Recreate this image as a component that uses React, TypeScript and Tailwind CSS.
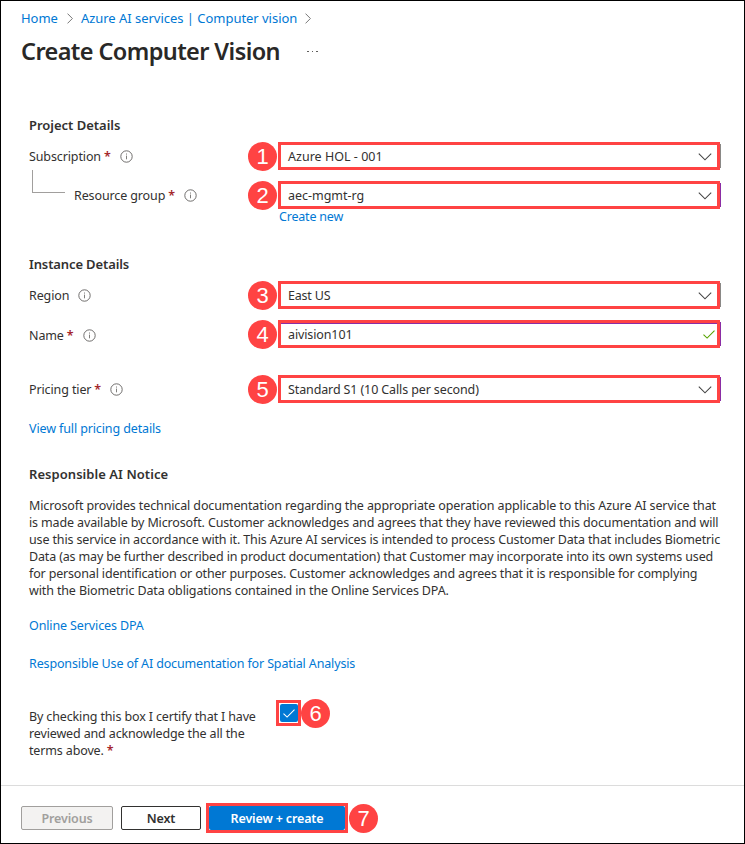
import type { ReactNode } from "react";

function Chevron({ className }: { className?: string }) {
  return (
    <svg viewBox="0 0 14 8" className={`mt-0.5 h-2 w-3.5 shrink-0 ${className ?? ""}`} fill="none" stroke="#444" strokeWidth="1.05">
      <path d="M0.8 0.6 L7 6.8 L13.2 0.6" />
    </svg>
  );
}

function Separator() {
  return (
    <svg viewBox="0 0 6 11" className="h-[11px] w-1.5 shrink-0" fill="none" stroke="#777" strokeWidth="1">
      <path d="M0.5 0.6 L5.4 5.5 L0.5 10.4" />
    </svg>
  );
}

function Info() {
  return (
    <svg viewBox="0 0 13 13" className="h-[13px] w-[13px] shrink-0" fill="none" stroke="#605e5c" strokeWidth="0.9">
      <circle cx="6.5" cy="6.5" r="5.7" />
      <path d="M6.5 5.6 V9.3 M6.5 3.5 V4.6" strokeWidth="0.8" />
    </svg>
  );
}

function Tick({ className }: { className: string }) {
  return (
    <svg viewBox="0 0 12 9" className={`h-[9px] w-3 shrink-0 ${className}`} fill="none" stroke="currentColor" strokeWidth="1.1">
      <path d="M0.5 4.6 L4.1 8.1 L11.5 0.7" />
    </svg>
  );
}

function Step({ n }: { n: number }) {
  return (
    <span className="flex h-[29px] w-[29px] shrink-0 items-center justify-center rounded-full bg-[#ff4343] pt-px font-['Liberation_Sans',Arial,sans-serif] text-[22px] font-normal leading-none tracking-normal text-white">
      {n}
    </span>
  );
}

function Label({ text, required }: { text: string; required?: boolean }) {
  return (
    <span className="flex items-center whitespace-nowrap">
      <span>{text}</span>
      {required && <span className="ml-[3px] font-semibold text-[#a4262c]">*</span>}
      <span className="ml-[9px] flex">
        <Info />
      </span>
    </span>
  );
}

function Field({ n, edge, top, tracking, children, icon }: { n: number; edge: string; top?: boolean; tracking?: string; children: ReactNode; icon: ReactNode }) {
  return (
    <div className="flex h-7 w-[473px] shrink-0 items-center">
      <Step n={n} />
      <div className="ml-px flex h-7 w-[442px] items-center justify-between border-[3px] border-[#ff4343] bg-white">
        <div className={`flex h-full w-full items-center justify-between pl-[7px] ${top ? "border-t border-[#8a2da5] pr-[2px]" : "pr-[5px]"}`}>
          <span className={`whitespace-nowrap ${tracking ?? ""}`}>{children}</span>
          {icon}
        </div>
      </div>
      <span className={`h-6 w-px ${edge}`} />
    </div>
  );
}

const lines = [
  { text: "Microsoft provides technical documentation regarding the appropriate operation applicable to this Azure AI service that", tracking: "tracking-[-0.12px]" },
  { text: "is made available by Microsoft. Customer acknowledges and agrees that they have reviewed this documentation and will", tracking: "tracking-[-0.137px]" },
  { text: "use this service in accordance with it. This Azure AI services is intended to process Customer Data that includes Biometric", tracking: "tracking-[-0.145px]" },
  { text: "Data (as may be further described in product documentation) that Customer may incorporate into its own systems used", tracking: "tracking-[-0.155px]" },
  { text: "for personal identification or other purposes. Customer acknowledges and agrees that it is responsible for complying", tracking: "tracking-[-0.162px]" },
  { text: "with the Biometric Data obligations contained in the Online Services DPA.", tracking: "tracking-[-0.13px]" },
];

export default function App() {
  return (
    <div className="flex h-[844px] w-[745px] flex-col overflow-hidden border border-black bg-white font-['Noto_Sans','Open_Sans',sans-serif] text-[12.5px] leading-[17px] tracking-[-0.12px] text-[#323130]">
      <nav className="mt-[9px] flex h-[17px] items-center whitespace-nowrap pl-5 text-[13px] tracking-[-0.02px] text-[#0078d4]">
        <a>Home</a>
        <span className="ml-[9px] mr-2 flex">
          <Separator />
        </span>
        <a className="tracking-[-0.03px]">Azure AI services | Computer vision</a>
        <span className="ml-2 flex">
          <Separator />
        </span>
      </nav>
      <header className="mt-[6px] flex h-9 items-center pl-5">
        <h1 className="w-[286px] whitespace-nowrap text-[23.5px] font-semibold leading-9 tracking-[-0.6px] text-[#292827]">Create Computer Vision</h1>
        <span className="mt-px flex gap-[3px]">
          <i className="h-[1.5px] w-[1.5px] bg-[#605e5c]" />
          <i className="h-[1.5px] w-[1.5px] bg-[#605e5c]" />
          <i className="h-[1.5px] w-[1.5px] bg-[#605e5c]" />
        </span>
      </header>

      <main className="flex flex-col pl-7">
        <h2 className="mt-[48px] h-[17px] whitespace-nowrap text-[13px] font-semibold tracking-[-0.02px]">Project Details</h2>
        <div className="mt-[8px] flex h-7 items-center">
          <div className="w-[219px]">
            <Label text="Subscription" required />
          </div>
          <Field n={1} edge="bg-[#8a8886]" tracking="tracking-[0.02px]" icon={<Chevron />}>Azure HOL - 001</Field>
        </div>
        <div className="flex h-[39px] justify-between">
          <div className="flex w-[219px] shrink-0">
            <span className="ml-[3px] h-[23px] w-[33px] border-b border-l border-[#a19f9d]" />
            <div className="ml-[9px] flex h-7 items-center self-end">
              <Label text="Resource group" required />
            </div>
          </div>
          <div className="flex flex-1 items-end">
            <Field n={2} edge="bg-[#8a2da5]" tracking="tracking-[-0.03px]" icon={<Chevron />}>aec-mgmt-rg</Field>
          </div>
        </div>
        <a className="-mt-px ml-[250px] h-[17px] whitespace-nowrap tracking-[-0.2px] text-[#0078d4]">Create new</a>

        <h2 className="mt-[31px] h-[17px] whitespace-nowrap text-[13px] font-semibold">Instance Details</h2>
        <div className="mt-[8px] flex h-7 items-center">
          <div className="w-[219px]">
            <Label text="Region" />
          </div>
          <Field n={3} edge="bg-[#8a8886]" tracking="tracking-[-0.2px]" icon={<Chevron />}>East US</Field>
        </div>
        <div className="mt-[11px] flex h-7 items-center">
          <div className="w-[219px] pt-[2px]">
            <Label text="Name" required />
          </div>
          <Field n={4} edge="bg-[#8a2da5]" top icon={<Tick className="text-[#57a300]" />}>aivision101</Field>
        </div>
        <div className="mt-[27px] flex h-7 items-center">
          <div className="w-[219px]">
            <Label text="Pricing tier" required />
          </div>
          <Field n={5} edge="bg-[#8a2da5]" icon={<Chevron />}>Standard S1 (10 Calls per second)</Field>
        </div>
        <a className="mt-[17px] h-[17px] whitespace-nowrap text-[#0078d4]">View full pricing details</a>

        <h2 className="mt-[29px] h-[17px] whitespace-nowrap text-[13px] font-semibold tracking-[0.05px]">Responsible AI Notice</h2>
        <p className="mt-[14px] whitespace-nowrap">
          {lines.map((line) => (
            <span key={line.text} className={`block h-[17px] ${line.tracking}`}>{line.text}</span>
          ))}
        </p>
        <a className="mt-[18px] h-[17px] whitespace-nowrap text-[#0078d4]">Online Services DPA</a>
        <a className="mt-[21px] h-[17px] whitespace-nowrap tracking-[-0.14px] text-[#0078d4]">Responsible Use of AI documentation for Spatial Analysis</a>

        <div className="mt-[28px] flex">
          <p className="mt-2 w-[247px] whitespace-nowrap tracking-[-0.14px]">
            By checking this box I certify that I have
            <br />
            reviewed and acknowledge the all the
            <br />
            terms above. <span className="font-semibold text-[#a4262c]">*</span>
          </p>
          <span className="flex h-[26px] w-[25px] items-center justify-center border-[3px] border-[#ff4343] bg-white">
            <span className="flex h-[18px] w-[18px] items-center justify-center rounded-[2px] bg-[#0078d4]">
              <Tick className="text-white" />
            </span>
          </span>
          <span className="-mt-[1px]">
            <Step n={6} />
          </span>
        </div>
      </main>

      <footer className="mt-[26px] flex h-[57px] items-center border-t border-[#dcdcdc] pl-5 pt-[8px] text-[12.5px] font-semibold tracking-[-0.15px]">
        <button className="flex h-6 w-[92px] items-center justify-center rounded-[2px] border border-[#a19f9d] bg-[#f3f2f1] text-[#a19f9d]">Previous</button>
        <button className="ml-2 flex h-6 w-20 items-center justify-center rounded-[2px] border border-[#323130] bg-white">Next</button>
        <span className="ml-[5px] flex h-[30px] w-[142px] border-[3px] border-[#ff4343] bg-white">
          <button className="h-full w-full whitespace-nowrap rounded-[2px] bg-[#0078d4] text-white">Review + create</button>
        </span>
        <span className="ml-px pt-px">
          <Step n={7} />
        </span>
      </footer>
    </div>
  );
}
